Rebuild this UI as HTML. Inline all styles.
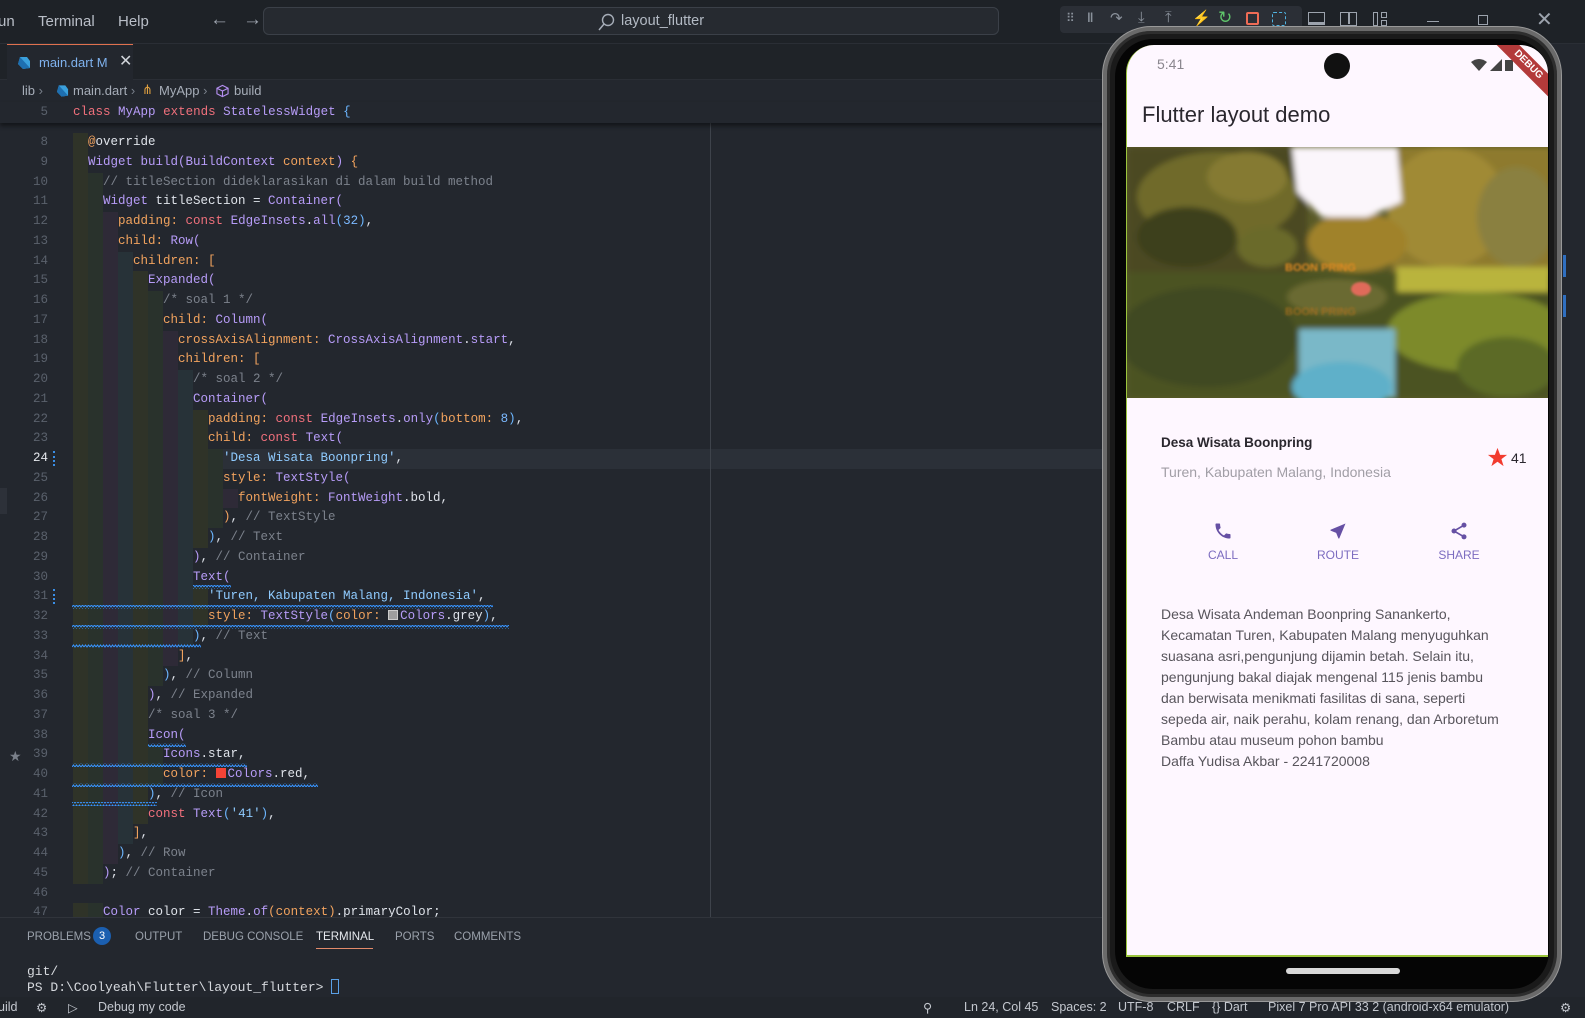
<!DOCTYPE html>
<html><head><meta charset="utf-8">
<style>
*{margin:0;padding:0;box-sizing:border-box}
html,body{width:1585px;height:1018px;overflow:hidden}
body{background:#23272e;font-family:"Liberation Sans",sans-serif;position:relative;color:#c8ccd4}
.abs{position:absolute}
#title{left:0;top:0;width:1585px;height:44px;background:#1e2227;border-bottom:1px solid #2a2e35}
.menu{top:13px;font-size:15px;color:#b9bec7}
#search{left:263px;top:7px;width:736px;height:28px;border:1px solid #3b4048;border-radius:6px;background:#262a30}
#dbg{left:1060px;top:6px;width:242px;height:27px;background:#2b2f36;border-radius:4px}
.ti{top:8px;font-size:15px}
#tabbar{left:0;top:44px;width:1110px;height:36px;background:#1f2328;border-bottom:1px solid #2a2e35}
#tab{left:7px;top:44px;width:126px;height:37px;background:#23272e;border-top:1px solid #e0714e}
#bc{left:0;top:81px;width:1110px;height:21px;font-size:13px;color:#a6adb8}
#sticky{left:0;top:102px;width:1110px;height:21px;background:#23272e;box-shadow:0 3px 4px rgba(0,0,0,.45);z-index:3}
.code{font-family:"Liberation Mono",monospace;font-size:12.5px;color:#dfe3ea}
.pre{white-space:pre}
#lines{left:73px;top:133px;width:1040px}
.l{height:19.75px;line-height:19.75px;white-space:pre;overflow:hidden}
.i{display:inline-block;width:15px;height:19.75px;vertical-align:top}
.g1{background:#2f3328}.g2{background:#29322c}.g3{background:#2e2a37}.g4{background:#273238}
#nums{left:0;top:133px;width:48px;text-align:right;color:#5a616c}
.k{color:#f0707c}.t{color:#b79cf8}.p{color:#f2a35e}.s{color:#8fcbff}.n{color:#7cb9ff}.c{color:#7c828c}.b{color:#6cb6ff}
.sw{display:inline-block;width:10px;height:10px;vertical-align:-1px;margin-right:2px;border:1px solid #ccc}
#panel{left:0;top:917px;width:1110px;height:80px;background:#23272e;border-top:1px solid #30343b;z-index:3}
.pt{top:13px;font-size:11.5px;color:#9aa1ab}
#status{left:0;top:997px;width:1585px;height:21px;background:#21252b;font-size:12.5px;color:#c4c8cf;z-index:3}
.st{top:3px;white-space:nowrap}
</style></head><body>

<div id="title" class="abs">
 <div class="abs menu" style="left:-2px">un</div>
 <div class="abs menu" style="left:38px">Terminal</div>
 <div class="abs menu" style="left:118px">Help</div>
 <div class="abs menu" style="left:210px;top:9px;font-size:19px;color:#9ca3ad">&#8592;</div>
 <div class="abs menu" style="left:243px;top:9px;font-size:19px;color:#9ca3ad">&#8594;</div>
 <div id="search" class="abs">
  <svg class="abs" style="left:333px;top:4px" width="20" height="20" viewBox="0 0 20 20"><circle cx="11" cy="8" r="5.5" fill="none" stroke="#a6adb8" stroke-width="1.4"/><path d="M7 12 L2 18" stroke="#a6adb8" stroke-width="1.5"/></svg>
  <div class="abs" style="left:357px;top:5px;font-size:14.5px;color:#b3bac4">layout_flutter</div>
 </div>
 <div id="dbg" class="abs">
  <div class="abs ti" style="left:6px;top:5px;color:#8a919b;font-size:12px">&#10303;</div>
  <div class="abs ti" style="left:27px;top:4px;color:#8a919b;font-size:13px;font-weight:bold">&#8214;</div>
  <div class="abs ti" style="left:50px;top:3px;color:#8a919b">&#8631;</div>
  <div class="abs ti" style="left:78px;top:3px;color:#8a919b">&#10515;</div>
  <div class="abs ti" style="left:105px;top:3px;color:#8a919b">&#10514;</div>
  <div class="abs ti" style="left:132px;top:3px;color:#f0a020">&#9889;</div>
  <div class="abs ti" style="left:158px;top:2px;color:#5fc46a;font-size:17px">&#8635;</div>
  <div class="abs" style="left:186px;top:6px;width:13px;height:13px;border:2px solid #ee6c56;border-radius:2px"></div>
  <div class="abs" style="left:212px;top:6px;width:14px;height:14px;border:1.5px dashed #4fb3e0;border-radius:2px"></div>
 </div>
 <div class="abs" style="left:1308px;top:12px;width:17px;height:13px;border:1.5px solid #9ca3ad;border-bottom-width:3px"></div>
 <div class="abs" style="left:1340px;top:12px;width:17px;height:14px;border:1.5px solid #9ca3ad"><div style="position:absolute;left:7px;top:0;width:1.5px;height:11px;background:#9ca3ad"></div></div>
 <div class="abs" style="left:1373px;top:12px;width:5px;height:14px;border:1.5px solid #9ca3ad"></div>
 <div class="abs" style="left:1381px;top:12px;width:6px;height:6px;border:1.5px solid #9ca3ad"></div>
 <div class="abs" style="left:1381px;top:20px;width:6px;height:6px;border:1.5px solid #9ca3ad"></div>
 <div class="abs" style="left:1427px;top:21px;width:12px;height:1px;background:#9ca3ad"></div>
 <div class="abs" style="left:1478px;top:15px;width:10px;height:10px;border:1px solid #9ca3ad"></div>
 <div class="abs" style="left:1536px;top:7px;font-size:20px;color:#9ca3ad">&#10005;</div>
</div>

<div id="tabbar" class="abs"></div>
<div id="tab" class="abs">
 <svg class="abs" style="left:10px;top:11px" width="14" height="14" viewBox="0 0 14 14"><path d="M3 1 L10 1 L13 5 L13 12 L6 13 L1 8 Z" fill="#3aa0dc"/><path d="M3 1 L13 12 L6 13 L1 8Z" fill="#1e6fb0"/></svg>
 <div class="abs" style="left:32px;top:10px;font-size:13px;color:#7fb2ee">main.dart M</div>
 <div class="abs" style="left:112px;top:6px;font-size:16px;color:#d0d4da">&#10005;</div>
</div>

<div id="bc" class="abs">
 <div class="abs" style="left:22px;top:2px">lib <span style="color:#7a818c">&#8250;</span></div>
 <svg class="abs" style="left:56px;top:3px" width="13" height="14" viewBox="0 0 14 14"><path d="M3 1 L10 1 L13 5 L13 12 L6 13 L1 8 Z" fill="#3aa0dc"/><path d="M3 1 L13 12 L6 13 L1 8Z" fill="#1e6fb0"/></svg>
 <div class="abs" style="left:73px;top:2px">main.dart <span style="color:#7a818c">&#8250;</span></div>
 <div class="abs" style="left:142px;top:1px;color:#e0a040;font-size:13px">&#8916;</div>
 <div class="abs" style="left:159px;top:2px">MyApp <span style="color:#7a818c">&#8250;</span></div>
 <svg class="abs" style="left:216px;top:3px" width="13" height="14" viewBox="0 0 14 14"><path d="M7 1 L13 4 L13 10 L7 13 L1 10 L1 4 Z M1 4 L7 7 L13 4 M7 7 L7 13" fill="none" stroke="#b48ef0" stroke-width="1.2"/></svg>
 <div class="abs" style="left:234px;top:2px">build</div>
</div>

<div id="sticky" class="abs code">
 <div class="abs" style="left:0;width:48px;text-align:right;top:3px;color:#5a616c">5</div>
 <div class="abs pre" style="left:73px;top:3px"><span class="k">class</span> <span class="t">MyApp</span> <span class="k">extends</span> <span class="t">StatelessWidget</span> <span class="b">{</span></div>
</div>

<div class="abs" style="left:73px;top:449px;width:1040px;height:20px;background:#2b3038"></div>
<div class="abs" style="left:710px;top:123px;width:1px;height:794px;background:#3e434b"></div>
<div class="abs" style="left:0;top:488px;width:7px;height:26px;background:#2d3139"></div>

<div id="nums" class="abs code">
<div class="l">8</div><div class="l">9</div><div class="l">10</div><div class="l">11</div><div class="l">12</div><div class="l">13</div><div class="l">14</div><div class="l">15</div><div class="l">16</div><div class="l">17</div><div class="l">18</div><div class="l">19</div><div class="l">20</div><div class="l">21</div><div class="l">22</div><div class="l">23</div><div class="l" style="color:#e6e9ee">24</div><div class="l">25</div><div class="l">26</div><div class="l">27</div><div class="l">28</div><div class="l">29</div><div class="l">30</div><div class="l">31</div><div class="l">32</div><div class="l">33</div><div class="l">34</div><div class="l">35</div><div class="l">36</div><div class="l">37</div><div class="l">38</div><div class="l">39</div><div class="l">40</div><div class="l">41</div><div class="l">42</div><div class="l">43</div><div class="l">44</div><div class="l">45</div><div class="l">46</div><div class="l">47</div>
</div>
<div class="abs" style="left:53px;top:451px;width:2px;height:15px;border-left:2px dotted #3a8ee6"></div>
<div class="abs" style="left:53px;top:589px;width:2px;height:15px;border-left:2px dotted #3a8ee6"></div>
<div class="abs" style="left:78px;top:448px;font-size:15px;color:#f5c518">&#9679;</div>
<div class="abs" style="left:81px;top:462px;width:5px;height:4px;background:#c8a020"></div>
<div class="abs" style="left:9px;top:748px;font-size:14px;color:#7a808a">&#9733;</div>

<div id="lines" class="abs code">
<div class="l"><i class="i g1"></i><span class="p">@</span>override</div>
<div class="l"><i class="i g1"></i><span class="t">Widget build(BuildContext</span> <span class="p">context</span><span class="t">)</span> <span class="p">{</span></div>
<div class="l"><i class="i g1"></i><i class="i g2"></i><span class="c">// titleSection dideklarasikan di dalam build method</span></div>
<div class="l"><i class="i g1"></i><i class="i g2"></i><span class="t">Widget</span> titleSection = <span class="t">Container(</span></div>
<div class="l"><i class="i g1"></i><i class="i g2"></i><i class="i g3"></i><span class="p">padding:</span> <span class="k">const</span> <span class="t">EdgeInsets</span>.<span class="t">all</span><span class="b">(</span><span class="n">32</span><span class="b">)</span>,</div>
<div class="l"><i class="i g1"></i><i class="i g2"></i><i class="i g3"></i><span class="p">child:</span> <span class="t">Row(</span></div>
<div class="l"><i class="i g1"></i><i class="i g2"></i><i class="i g3"></i><i class="i g4"></i><span class="p">children: [</span></div>
<div class="l"><i class="i g1"></i><i class="i g2"></i><i class="i g3"></i><i class="i g4"></i><i class="i g1"></i><span class="t">Expanded(</span></div>
<div class="l"><i class="i g1"></i><i class="i g2"></i><i class="i g3"></i><i class="i g4"></i><i class="i g1"></i><i class="i g2"></i><span class="c">/* soal 1 */</span></div>
<div class="l"><i class="i g1"></i><i class="i g2"></i><i class="i g3"></i><i class="i g4"></i><i class="i g1"></i><i class="i g2"></i><span class="p">child:</span> <span class="t">Column(</span></div>
<div class="l"><i class="i g1"></i><i class="i g2"></i><i class="i g3"></i><i class="i g4"></i><i class="i g1"></i><i class="i g2"></i><i class="i g3"></i><span class="p">crossAxisAlignment:</span> <span class="t">CrossAxisAlignment</span>.<span class="t">start</span>,</div>
<div class="l"><i class="i g1"></i><i class="i g2"></i><i class="i g3"></i><i class="i g4"></i><i class="i g1"></i><i class="i g2"></i><i class="i g3"></i><span class="p">children: [</span></div>
<div class="l"><i class="i g1"></i><i class="i g2"></i><i class="i g3"></i><i class="i g4"></i><i class="i g1"></i><i class="i g2"></i><i class="i g3"></i><i class="i g4"></i><span class="c">/* soal 2 */</span></div>
<div class="l"><i class="i g1"></i><i class="i g2"></i><i class="i g3"></i><i class="i g4"></i><i class="i g1"></i><i class="i g2"></i><i class="i g3"></i><i class="i g4"></i><span class="t">Container(</span></div>
<div class="l"><i class="i g1"></i><i class="i g2"></i><i class="i g3"></i><i class="i g4"></i><i class="i g1"></i><i class="i g2"></i><i class="i g3"></i><i class="i g4"></i><i class="i g1"></i><span class="p">padding:</span> <span class="k">const</span> <span class="t">EdgeInsets</span>.<span class="t">only</span><span class="b">(</span><span class="p">bottom:</span> <span class="n">8</span><span class="b">)</span>,</div>
<div class="l"><i class="i g1"></i><i class="i g2"></i><i class="i g3"></i><i class="i g4"></i><i class="i g1"></i><i class="i g2"></i><i class="i g3"></i><i class="i g4"></i><i class="i g1"></i><span class="p">child:</span> <span class="k">const</span> <span class="t">Text(</span></div>
<div class="l"><i class="i g1"></i><i class="i g2"></i><i class="i g3"></i><i class="i g4"></i><i class="i g1"></i><i class="i g2"></i><i class="i g3"></i><i class="i g4"></i><i class="i g1"></i><i class="i g2"></i><span class="s">'Desa Wisata Boonpring'</span>,</div>
<div class="l"><i class="i g1"></i><i class="i g2"></i><i class="i g3"></i><i class="i g4"></i><i class="i g1"></i><i class="i g2"></i><i class="i g3"></i><i class="i g4"></i><i class="i g1"></i><i class="i g2"></i><span class="p">style:</span> <span class="t">TextStyle(</span></div>
<div class="l"><i class="i g1"></i><i class="i g2"></i><i class="i g3"></i><i class="i g4"></i><i class="i g1"></i><i class="i g2"></i><i class="i g3"></i><i class="i g4"></i><i class="i g1"></i><i class="i g2"></i><i class="i g3"></i><span class="p">fontWeight:</span> <span class="t">FontWeight</span>.bold,</div>
<div class="l"><i class="i g1"></i><i class="i g2"></i><i class="i g3"></i><i class="i g4"></i><i class="i g1"></i><i class="i g2"></i><i class="i g3"></i><i class="i g4"></i><i class="i g1"></i><i class="i g2"></i><span class="p">)</span>, <span class="c">// TextStyle</span></div>
<div class="l"><i class="i g1"></i><i class="i g2"></i><i class="i g3"></i><i class="i g4"></i><i class="i g1"></i><i class="i g2"></i><i class="i g3"></i><i class="i g4"></i><i class="i g1"></i><span class="b">)</span>, <span class="c">// Text</span></div>
<div class="l"><i class="i g1"></i><i class="i g2"></i><i class="i g3"></i><i class="i g4"></i><i class="i g1"></i><i class="i g2"></i><i class="i g3"></i><i class="i g4"></i><span class="t">)</span>, <span class="c">// Container</span></div>
<div class="l"><i class="i g1"></i><i class="i g2"></i><i class="i g3"></i><i class="i g4"></i><i class="i g1"></i><i class="i g2"></i><i class="i g3"></i><i class="i g4"></i><span class="t">Text(</span></div>
<div class="l"><i class="i g1"></i><i class="i g2"></i><i class="i g3"></i><i class="i g4"></i><i class="i g1"></i><i class="i g2"></i><i class="i g3"></i><i class="i g4"></i><i class="i g1"></i><span class="s">'Turen, Kabupaten Malang, Indonesia'</span>,</div>
<div class="l"><i class="i g1"></i><i class="i g2"></i><i class="i g3"></i><i class="i g4"></i><i class="i g1"></i><i class="i g2"></i><i class="i g3"></i><i class="i g4"></i><i class="i g1"></i><span class="p">style:</span> <span class="t">TextStyle</span><span class="b">(</span><span class="p">color:</span> <span class="sw" style="background:#9e9e9e"></span><span class="t">Colors</span>.grey<span class="b">)</span>,</div>
<div class="l"><i class="i g1"></i><i class="i g2"></i><i class="i g3"></i><i class="i g4"></i><i class="i g1"></i><i class="i g2"></i><i class="i g3"></i><i class="i g4"></i><span class="b">)</span>, <span class="c">// Text</span></div>
<div class="l"><i class="i g1"></i><i class="i g2"></i><i class="i g3"></i><i class="i g4"></i><i class="i g1"></i><i class="i g2"></i><i class="i g3"></i><span class="p">]</span>,</div>
<div class="l"><i class="i g1"></i><i class="i g2"></i><i class="i g3"></i><i class="i g4"></i><i class="i g1"></i><i class="i g2"></i><span class="b">)</span>, <span class="c">// Column</span></div>
<div class="l"><i class="i g1"></i><i class="i g2"></i><i class="i g3"></i><i class="i g4"></i><i class="i g1"></i><span class="t">)</span>, <span class="c">// Expanded</span></div>
<div class="l"><i class="i g1"></i><i class="i g2"></i><i class="i g3"></i><i class="i g4"></i><i class="i g1"></i><span class="c">/* soal 3 */</span></div>
<div class="l"><i class="i g1"></i><i class="i g2"></i><i class="i g3"></i><i class="i g4"></i><i class="i g1"></i><span class="t">Icon(</span></div>
<div class="l"><i class="i g1"></i><i class="i g2"></i><i class="i g3"></i><i class="i g4"></i><i class="i g1"></i><i class="i g2"></i><span class="t">Icons</span>.star,</div>
<div class="l"><i class="i g1"></i><i class="i g2"></i><i class="i g3"></i><i class="i g4"></i><i class="i g1"></i><i class="i g2"></i><span class="p">color:</span> <span class="sw" style="background:#f44336;border-color:#f44336"></span><span class="t">Colors</span>.red,</div>
<div class="l"><i class="i g1"></i><i class="i g2"></i><i class="i g3"></i><i class="i g4"></i><i class="i g1"></i><span class="b">)</span>, <span class="c">// Icon</span></div>
<div class="l"><i class="i g1"></i><i class="i g2"></i><i class="i g3"></i><i class="i g4"></i><i class="i g1"></i><span class="k">const</span> <span class="t">Text</span><span class="b">(</span><span class="s">'41'</span><span class="b">)</span>,</div>
<div class="l"><i class="i g1"></i><i class="i g2"></i><i class="i g3"></i><i class="i g4"></i><span class="p">]</span>,</div>
<div class="l"><i class="i g1"></i><i class="i g2"></i><i class="i g3"></i><span class="b">)</span>, <span class="c">// Row</span></div>
<div class="l"><i class="i g1"></i><i class="i g2"></i><span class="t">)</span>; <span class="c">// Container</span></div>
<div class="l"></div>
<div class="l"><i class="i g1"></i><i class="i g2"></i><span class="t">Color</span> color = <span class="t">Theme</span>.<span class="t">of</span><span class="p">(context)</span>.primaryColor;</div>
</div>

<svg class="abs" style="left:0;top:0;z-index:2" width="720" height="917">
 <defs><pattern id="wv" width="6" height="4" patternUnits="userSpaceOnUse"><path d="M0 3 L1.5 1 L3 3 L4.5 1 L6 3" stroke="#3794ff" stroke-width="1" fill="none"/></pattern></defs>
 <rect x="193" y="585" width="38" height="4" fill="url(#wv)"/>
 <rect x="72" y="605" width="421" height="4" fill="url(#wv)"/>
 <rect x="72" y="625" width="437" height="4" fill="url(#wv)"/>
 <rect x="72" y="644" width="129" height="4" fill="url(#wv)"/>
 <rect x="148" y="743" width="38" height="4" fill="url(#wv)"/>
 <rect x="72" y="763" width="175" height="4" fill="url(#wv)"/>
 <rect x="72" y="783" width="246" height="4" fill="url(#wv)"/>
 <rect x="72" y="802" width="85" height="4" fill="url(#wv)"/>
</svg>

<div id="panel" class="abs">
 <div class="abs pt" style="left:27px">PROBLEMS</div>
 <div class="abs" style="left:93px;top:9px;width:18px;height:18px;border-radius:9px;background:#1b5fb0;color:#fff;font-size:11px;text-align:center;line-height:18px">3</div>
 <div class="abs pt" style="left:135px">OUTPUT</div>
 <div class="abs pt" style="left:203px">DEBUG CONSOLE</div>
 <div class="abs pt" style="left:316px;color:#e6e9ee">TERMINAL</div>
 <div class="abs" style="left:316px;top:30px;width:57px;height:1px;background:#e38a6a"></div>
 <div class="abs pt" style="left:395px">PORTS</div>
 <div class="abs pt" style="left:454px">COMMENTS</div>
 <div class="abs code pre" style="left:27px;top:46px;font-size:13px;color:#d6d9de">git/</div>
 <div class="abs code pre" style="left:27px;top:61px;font-size:13px;color:#d6d9de">PS D:\Coolyeah\Flutter\layout_flutter&gt; <span style="display:inline-block;width:8px;height:15px;border:1px solid #5aa0e6;vertical-align:-3px"></span></div>
</div>

<div id="status" class="abs">
 <div class="abs st" style="left:-2px">uild</div>
 <div class="abs st" style="left:36px">&#9881;</div>
 <div class="abs st" style="left:68px">&#9655;</div>
 <div class="abs st" style="left:98px">Debug my code</div>
 <div class="abs st" style="left:923px">&#9906;</div>
 <div class="abs st" style="left:964px">Ln 24, Col 45</div>
 <div class="abs st" style="left:1051px">Spaces: 2</div>
 <div class="abs st" style="left:1118px">UTF-8</div>
 <div class="abs st" style="left:1167px">CRLF</div>
 <div class="abs st" style="left:1212px">{} Dart</div>
 <div class="abs st" style="left:1268px">Pixel 7 Pro API 33 2 (android-x64 emulator)</div>
 <div class="abs st" style="left:1560px">&#9881;</div>
</div>

<div class="abs" style="left:1563px;top:255px;width:3px;height:22px;background:#2f6fc0"></div>
<div class="abs" style="left:1563px;top:295px;width:3px;height:22px;background:#2f6fc0"></div>

<!-- PHONE -->
<div class="abs" style="left:1103px;top:27px;width:458px;height:974px;border-radius:48px;background:#1a1a1a;border:4px solid #6a6a6a;box-shadow:inset 0 0 0 3px #2e2e2e,0 0 0 1px #999;z-index:5"></div>
<div class="abs" style="left:1115px;top:39px;width:434px;height:950px;border-radius:38px;background:#050505;z-index:5"></div>
<div class="abs" style="left:1126px;top:45px;width:422px;height:912px;border-radius:28px 28px 0 0;background:#fef7ff;border-left:1px solid #9bc53d;border-bottom:2px solid #9bc53d;overflow:hidden;z-index:6">
 <div class="abs" style="left:30px;top:11px;font-size:14px;color:#8a868e">5:41</div>
 <div class="abs" style="left:197px;top:8px;width:26px;height:26px;border-radius:13px;background:#111"></div>
 <svg class="abs" style="left:344px;top:13px" width="50" height="14" viewBox="0 0 50 14"><path d="M0 4 Q8 -2 16 4 L8 13 Z" fill="#444"/><path d="M19 13 L31 1 L31 13Z" fill="#444"/><rect x="34" y="2" width="8" height="11" fill="#444"/></svg>
 <div class="abs" style="left:346px;top:12px;width:110px;height:16px;background:#b33a3a;transform:rotate(45deg);color:#fff;font-size:10px;font-weight:bold;text-align:center;line-height:16px">DEBUG</div>
 <div class="abs" style="left:15px;top:57px;font-size:22px;color:#2a272e">Flutter layout demo</div>
 <svg class="abs" style="left:0;top:102px" width="423" height="251" viewBox="0 0 423 251">
  <defs><filter id="bl"><feGaussianBlur stdDeviation="3"/></filter><filter id="bl2"><feGaussianBlur stdDeviation="1"/></filter></defs>
  <rect width="423" height="251" fill="#5a5a28"/>
  <g filter="url(#bl)">
   <rect x="0" y="0" width="180" height="130" fill="#4c4a22"/>
   <ellipse cx="90" cy="50" rx="80" ry="45" fill="#6f6a2a"/>
   <ellipse cx="120" cy="30" rx="40" ry="25" fill="#857a30"/>
   <ellipse cx="60" cy="90" rx="50" ry="30" fill="#3e3f1c"/>
   <ellipse cx="140" cy="100" rx="30" ry="20" fill="#6b6a2c"/>
   <rect x="265" y="0" width="160" height="130" fill="#8e7a2e"/>
   <ellipse cx="320" cy="60" rx="60" ry="60" fill="#a08a34"/>
   <ellipse cx="390" cy="70" rx="40" ry="50" fill="#8a8040"/>
   <ellipse cx="230" cy="95" rx="50" ry="30" fill="#a0822c"/>
   <polygon points="165,0 270,0 275,55 240,70 195,70 170,45" fill="#fbf6fb"/>
   <rect x="0" y="125" width="423" height="126" fill="#4b5224"/>
   <rect x="270" y="120" width="153" height="25" fill="#b9b43c"/>
   <ellipse cx="350" cy="185" rx="90" ry="40" fill="#7d8a2c"/>
   <ellipse cx="380" cy="220" rx="50" ry="30" fill="#5c6a26"/>
   <ellipse cx="80" cy="190" rx="90" ry="50" fill="#3f4a22"/>
   <rect x="172" y="182" width="96" height="69" fill="#7ab8c8"/>
   <ellipse cx="215" cy="240" rx="50" ry="25" fill="#5fb0c9"/>
   <ellipse cx="210" cy="150" rx="50" ry="18" fill="#6b6a30"/>
  </g>
  <g filter="url(#bl2)">
   <text x="158" y="124" font-family="Liberation Sans" font-size="11" font-weight="bold" fill="#e08a20">BOON PRING</text>
   <text x="158" y="168" font-family="Liberation Sans" font-size="11" font-weight="bold" fill="#a9701e" opacity=".8">BOON PRING</text>
   <ellipse cx="234" cy="142" rx="10" ry="7" fill="#e06a5a"/>
  </g>
 </svg>
 <div class="abs" style="left:34px;top:390px;font-size:13.5px;font-weight:bold;color:#2a272e">Desa Wisata Boonpring</div>
 <div class="abs" style="left:34px;top:419px;font-size:14px;color:#a19ea6">Turen, Kabupaten Malang, Indonesia</div>
 <svg class="abs" style="left:360px;top:402px" width="21" height="20" viewBox="0 0 24 23"><path d="M12 1 L15 9 L23 9 L16.5 14 L19 22 L12 17 L5 22 L7.5 14 L1 9 L9 9 Z" fill="#f23b2f"/></svg>
 <div class="abs" style="left:384px;top:405px;font-size:14px;color:#2a272e">41</div>
 <svg class="abs" style="left:86px;top:476px" width="20" height="20" viewBox="0 0 24 24"><path d="M6.6 10.8c1.4 2.8 3.8 5.1 6.6 6.6l2.2-2.2c.3-.3.7-.4 1-.2 1.1.4 2.3.6 3.6.6.6 0 1 .4 1 1V20c0 .6-.4 1-1 1C10.6 21 3 13.4 3 4c0-.6.4-1 1-1h3.5c.6 0 1 .4 1 1 0 1.3.2 2.5.6 3.6.1.3 0 .7-.2 1L6.6 10.8z" fill="#6650a4"/></svg>
 <div class="abs" style="left:66px;top:503px;width:60px;text-align:center;font-size:12px;color:#7c6cc0">CALL</div>
 <svg class="abs" style="left:201px;top:476px" width="20" height="20" viewBox="0 0 24 24"><path d="M21 3 L3 10.5 L3 11.5 L9.8 14.2 L12.5 21 L13.5 21 Z" fill="#6650a4"/></svg>
 <div class="abs" style="left:181px;top:503px;width:60px;text-align:center;font-size:12px;color:#7c6cc0">ROUTE</div>
 <svg class="abs" style="left:322px;top:476px" width="20" height="20" viewBox="0 0 24 24"><circle cx="18" cy="5" r="3" fill="#6650a4"/><circle cx="6" cy="12" r="3" fill="#6650a4"/><circle cx="18" cy="19" r="3" fill="#6650a4"/><path d="M18 5 L6 12 L18 19" stroke="#6650a4" stroke-width="2" fill="none"/></svg>
 <div class="abs" style="left:302px;top:503px;width:60px;text-align:center;font-size:12px;color:#7c6cc0">SHARE</div>
 <div class="abs" style="left:34px;top:559px;width:380px;font-size:14px;line-height:21px;color:#58555c">Desa Wisata Andeman Boonpring Sanankerto,<br>Kecamatan Turen, Kabupaten Malang menyuguhkan<br>suasana asri,pengunjung dijamin betah. Selain itu,<br>pengunjung bakal diajak mengenal 115 jenis bambu<br>dan berwisata menikmati fasilitas di sana, seperti<br>sepeda air, naik perahu, kolam renang, dan Arboretum<br>Bambu atau museum pohon bambu<br>Daffa Yudisa Akbar - 2241720008</div>
</div>
<div class="abs" style="left:1286px;top:968px;width:114px;height:6px;border-radius:3px;background:#d8d8d8;z-index:7"></div>
</body></html>
